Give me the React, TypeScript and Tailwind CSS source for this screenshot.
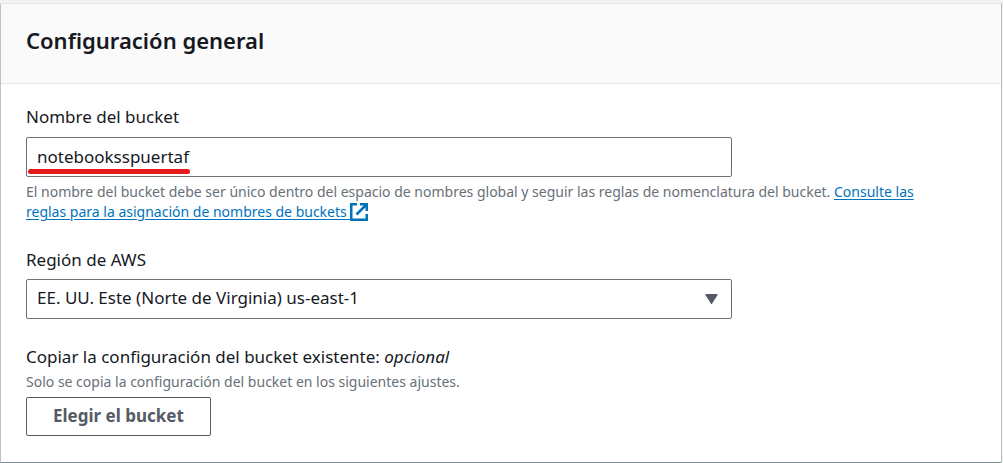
export default function App() {
  return (
    <main className="bg-[#f2f3f3] pt-[3px] pr-[2px] font-['Noto_Sans',sans-serif] text-[#16191f]">
      <section
        aria-labelledby="general-title"
        className="border-y border-l border-t-[#e6e9e9] border-b-[#7b8b8e] border-l-[#bcc3c8] bg-white shadow-[1px_0_0_#b9c2c3]"
      >
        <header className="border-b border-[#e4e8e8] bg-[#fafafa] px-[25px] pt-[21px] pb-[27px]">
          <h2 id="general-title" className="text-[22px] leading-[31px] font-semibold">
            Configuración general
          </h2>
        </header>

        <form className="px-[25px] pt-[21px] pb-[26px]" onSubmit={(e) => e.preventDefault()}>
          <div>
            <label htmlFor="bucket-name" className="block text-[17px] leading-6">
              Nombre del bucket
            </label>
            <div className="relative mt-2 w-full max-w-[706px]">
              <input
                id="bucket-name"
                type="text"
                defaultValue="notebooksspuertaf"
                aria-describedby="bucket-help"
                className="block h-10 w-full rounded-[2px] border border-[#687078] bg-white px-[10px] pb-[2px] text-[17px] outline-none"
              />
              <span
                aria-hidden="true"
                className="pointer-events-none absolute bottom-[3px] left-[2px] h-[5px] w-[162px] rounded-full bg-[#e51b1b]"
              />
            </div>
            <p id="bucket-help" className="mt-[5px] pr-8 text-[14px] leading-5 text-[#687078]">
              El nombre del bucket debe ser único dentro del espacio de nombres global y seguir las
              reglas de nomenclatura del bucket.{" "}
              <a href="#reglas" className="text-[#0073bb] underline underline-offset-2">
                Consulte las reglas para la asignación de nombres de buckets{" "}
                <svg
                  viewBox="0 0 18 18"
                  className="inline-block size-[18px] align-[-4px]"
                  fill="none"
                  stroke="currentColor"
                  strokeWidth="2.5"
                  aria-hidden="true"
                >
                  <path d="M7 1.25H1.25v15.5h15.5V11" />
                  <path d="M10 1.25h6.75V8M16.5 1.5 6.5 11.5" />
                </svg>
              </a>
            </p>
          </div>

          <div className="mt-[26px]">
            <label htmlFor="region" className="block text-[17px] leading-6">
              Región de AWS
            </label>
            <div className="relative mt-[7px] w-full max-w-[706px]">
              <select
                id="region"
                className="block h-10 w-full appearance-none rounded-[2px] border border-[#687078] bg-white px-[10px] pb-[2px] text-[17px] outline-none"
              >
                <option>EE. UU. Este (Norte de Virginia) us-east-1</option>
              </select>
              <svg
                viewBox="0 0 13 10"
                className="pointer-events-none absolute top-[15px] right-[14px] h-[10px] w-[13px] fill-[#545b64]"
                aria-hidden="true"
              >
                <path d="M.8 0h11.4q.8 0 .5.8L7.2 9.4q-.7 1-1.4 0L.3.8Q0 0 .8 0Z" />
              </svg>
            </div>
          </div>

          <div className="mt-[26px]">
            <h3 className="text-[17px] leading-6">
              Copiar la configuración del bucket existente: <em>opcional</em>
            </h3>
            <p className="mt-[3px] text-[14px] leading-5 text-[#687078]">
              Solo se copia la configuración del bucket en los siguientes ajustes.
            </p>
            <button
              type="button"
              className="mt-[5px] block h-[39px] rounded-[2px] border border-[#545b64] bg-white px-[26px] pb-[2px] text-[17px] font-bold text-[#545b64]"
            >
              Elegir el bucket
            </button>
          </div>
        </form>
      </section>
    </main>
  );
}
